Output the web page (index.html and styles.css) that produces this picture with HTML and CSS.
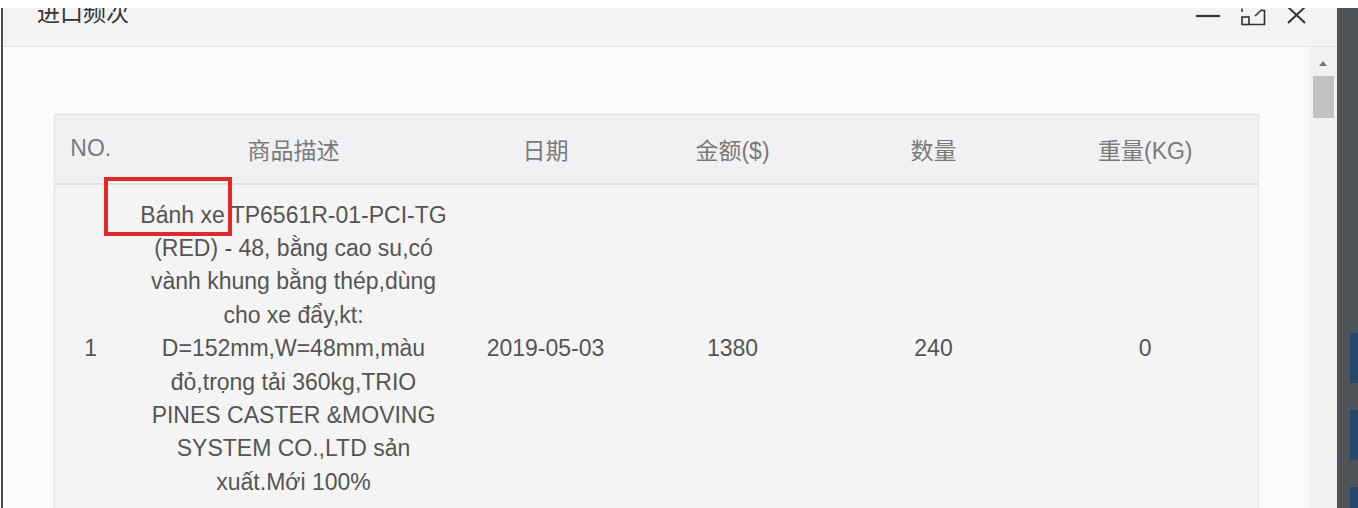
FILE: index.html
```html
<!DOCTYPE html>
<html lang="zh">
<head>
  <meta charset="UTF-8">
  <title>进口频次</title>
  <link rel="stylesheet" href="styles.css">
</head>
<body>
  <div class="screen">
    <div class="dialog">
      <div class="dialog-head">
        <h1 class="dialog-title">进口频次</h1>
        <div class="dialog-tools">
          <svg class="tool" width="24" height="18" viewBox="0 0 24 18"><path d="M0 8 H24" stroke="#333" stroke-width="2.2"/></svg>
          <svg class="tool" width="25" height="18" viewBox="0 0 25 18" fill="none" stroke="#333" stroke-width="1.6">
            <path d="M1 0.5 V4"/>
            <rect x="1" y="9" width="7" height="7.5"/>
            <path d="M8 16.5 H23.5 V2.5 H20.5"/>
            <path d="M14 8 L21 1.5"/>
          </svg>
          <svg class="tool close" width="19" height="18" viewBox="0 0 19 18" fill="none" stroke="#333" stroke-width="2"><path d="M1 0 L18 16 M18 0 L1 16"/></svg>
        </div>
      </div>
      <div class="dialog-body">
        <div class="dialog-content">
          <table class="freq-table">
            <colgroup>
              <col style="width:72px"><col style="width:334px"><col style="width:170px">
              <col style="width:204px"><col style="width:198px"><col style="width:226px">
            </colgroup>
            <thead>
              <tr>
                <th>NO.</th>
                <th>商品描述</th>
                <th>日期</th>
                <th>金额($)</th>
                <th>数量</th>
                <th>重量(KG)</th>
              </tr>
            </thead>
            <tbody>
              <tr>
                <td>1</td>
                <td class="desc">
                  <span class="mark"></span>
                  Bánh xe TP6561R-01-PCI-TG (RED) - 48, bằng cao su,có vành khung bằng thép,dùng cho xe đẩy,kt: D=152mm,W=48mm,màu đỏ,trọng tải 360kg,TRIO PINES CASTER &amp;MOVING SYSTEM CO.,LTD sản xuất.Mới 100%
                </td>
                <td>2019-05-03</td>
                <td>1380</td>
                <td>240</td>
                <td>0</td>
              </tr>
            </tbody>
          </table>
        </div>
        <div class="scrollbar">
          <div class="sb-arrow"></div>
          <div class="sb-thumb"></div>
        </div>
      </div>
    </div>
    <div class="backdrop">
      <div class="bd-block"></div>
      <div class="bd-block"></div>
      <div class="bd-block"></div>
    </div>
  </div>
</body>
</html>
```

FILE: styles.css
```css
* { margin: 0; padding: 0; box-sizing: border-box; }
html, body { height: 100%; }
body {
  background: #fff;
  font-family: "Liberation Sans", Arial, "Noto Sans CJK SC", sans-serif;
  overflow: hidden;
}

.screen {
  display: flex;
  height: 508px;
  padding-top: 8px;
}

/* Dialog */
.dialog {
  width: 1336px;
  margin-left: 1px;
  border-left: 2px solid #4c4c4c;
  display: flex;
  flex-direction: column;
  background: #fafafa;
}
.dialog-head {
  height: 39px;
  flex: none;
  background: #f3f3f3;
  border-bottom: 1px solid #e4e4e4;
  overflow: hidden;
  display: flex;
  justify-content: space-between;
  align-items: flex-start;
  padding: 0 31px 0 34px;
}
.dialog-title {
  font-size: 23px;
  line-height: 23px;
  font-weight: normal;
  color: #333;
  margin-top: -8px;
  font-family: "Noto Sans CJK SC", sans-serif;
}
.dialog-tools {
  display: flex;
  align-items: flex-start;
  gap: 21px;
}
.tool { display: block; }
.tool.close { margin-top: -1px; }

.dialog-body {
  flex: 1;
  display: flex;
  min-height: 0;
}
.dialog-content {
  flex: 1;
  padding: 67px 51px 0 51px;
  overflow: hidden;
}

/* Table */
.freq-table {
  width: 1204px;
  border-collapse: collapse;
  table-layout: fixed;
  border: 1px solid #e3e3e3;
  font-size: 23px;
}
.freq-table th {
  height: 69px;
  font-weight: normal;
  color: #7a7a7a;
  background: #f1f1f3;
  border-bottom: 2px solid #e1e1e1;
  text-align: center;
  vertical-align: middle;
}
.freq-table td {
  background: #f4f4f4;
  color: #555;
  line-height: 33.4px;
  text-align: center;
  vertical-align: middle;
  padding: 14px 10px;
}
.freq-table td.desc { position: relative; }
.mark {
  position: absolute;
  left: -23px;
  top: -8px;
  width: 128px;
  height: 59px;
  border: 4px solid #e0292b;
}

/* Scrollbar */
.scrollbar {
  width: 28px;
  flex: none;
  background: #f1f1f1;
  display: flex;
  flex-direction: column;
  align-items: center;
}
.sb-arrow {
  height: 29px;
  width: 100%;
  display: flex;
  align-items: center;
  justify-content: center;
  padding-top: 3px;
}
.sb-arrow::before {
  content: "";
  border-left: 4px solid transparent;
  border-right: 4px solid transparent;
  border-bottom: 5px solid #777;
}
.sb-thumb {
  width: 21px;
  height: 42px;
  background: #c2c2c2;
}

/* Backdrop behind dialog */
.backdrop {
  flex: 1;
  background: #4f5458;
  padding: 325px 0 0 13px;
  display: flex;
  flex-direction: column;
  gap: 27px;
}
.bd-block {
  height: 50px;
  flex: none;
  background: #28476c;
}
```
